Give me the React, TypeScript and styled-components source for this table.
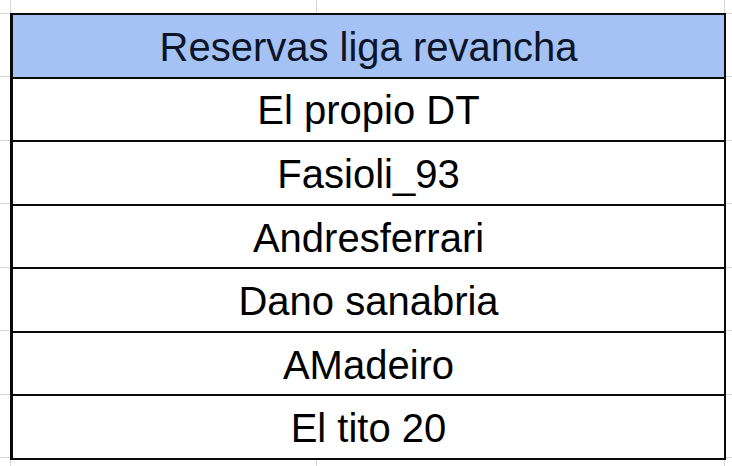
import { FC } from 'react';
import styled, { createGlobalStyle } from 'styled-components';

const names = ['El propio DT', 'Fasioli_93', 'Andresferrari', 'Dano sanabria', 'AMadeiro', 'El tito 20'];

const GRID = '#d6d6d6';
const INK = '#0a0a0a';

const GlobalStyle = createGlobalStyle`
  html, body {
    margin: 0;
    padding: 0;
    background: #ffffff;
  }
  body {
    font-family: "Liberation Sans", Arial, sans-serif;
  }
`;

const Sheet = styled.div`
  width: 732px;
  height: 466px;
  display: flex;
  flex-direction: column;
  overflow: hidden;
  background: #fff;
`;

const Strip = styled.div<{ $h: number }>`
  height: ${(p) => p.$h}px;
  display: grid;
  grid-template-columns: 11px 306px 408px 7px;
  flex: none;
`;

const StripCell = styled.div<{ $last?: boolean }>`
  border-right: ${(p) => (p.$last ? 'none' : `1px solid ${GRID}`)};
`;

const Middle = styled.div`
  flex: 1;
  display: flex;
`;

const Gutter = styled.div<{ $w: number }>`
  width: ${(p) => p.$w}px;
  flex: none;
  display: flex;
  flex-direction: column;
  padding: 2px 0;
`;

const GutterCell = styled.div`
  flex: 1;
  border-bottom: 1px solid ${GRID};
  &:first-child {
    border-top: 1px solid ${GRID};
    margin-top: -2px;
  }
`;

const Table = styled.div`
  flex: 1;
  display: flex;
  flex-direction: column;
  border: 2px solid ${INK};
  border-left-width: 3px;
`;

const Row = styled.div<{ $head?: boolean }>`
  flex: 1;
  display: flex;
  align-items: center;
  justify-content: center;
  padding-top: 3px;
  font-size: 40px;
  color: ${(p) => (p.$head ? '#0c1428' : '#000')};
  background: ${(p) => (p.$head ? '#a4c2f4' : '#fff')};
  & + & {
    border-top: 2px solid ${INK};
  }
`;

const Edge: FC<{ h: number }> = ({ h }) => (
  <Strip $h={h}>
    <StripCell />
    <StripCell />
    <StripCell />
    <StripCell $last />
  </Strip>
);

const App: FC = () => {
  return (
    <>
      <GlobalStyle />
      <Sheet>
        <Edge h={13} />
        <Middle>
          <Gutter $w={10}>
            {Array.from({ length: 7 }).map((_, i) => (
              <GutterCell key={i} />
            ))}
          </Gutter>
          <Table>
            <Row $head>Reservas liga revancha</Row>
            {names.map((n) => (
              <Row key={n}>{n}</Row>
            ))}
          </Table>
          <Gutter $w={6}>
            {Array.from({ length: 7 }).map((_, i) => (
              <GutterCell key={i} />
            ))}
          </Gutter>
        </Middle>
        <Edge h={6} />
      </Sheet>
    </>
  );
};

export default App;
